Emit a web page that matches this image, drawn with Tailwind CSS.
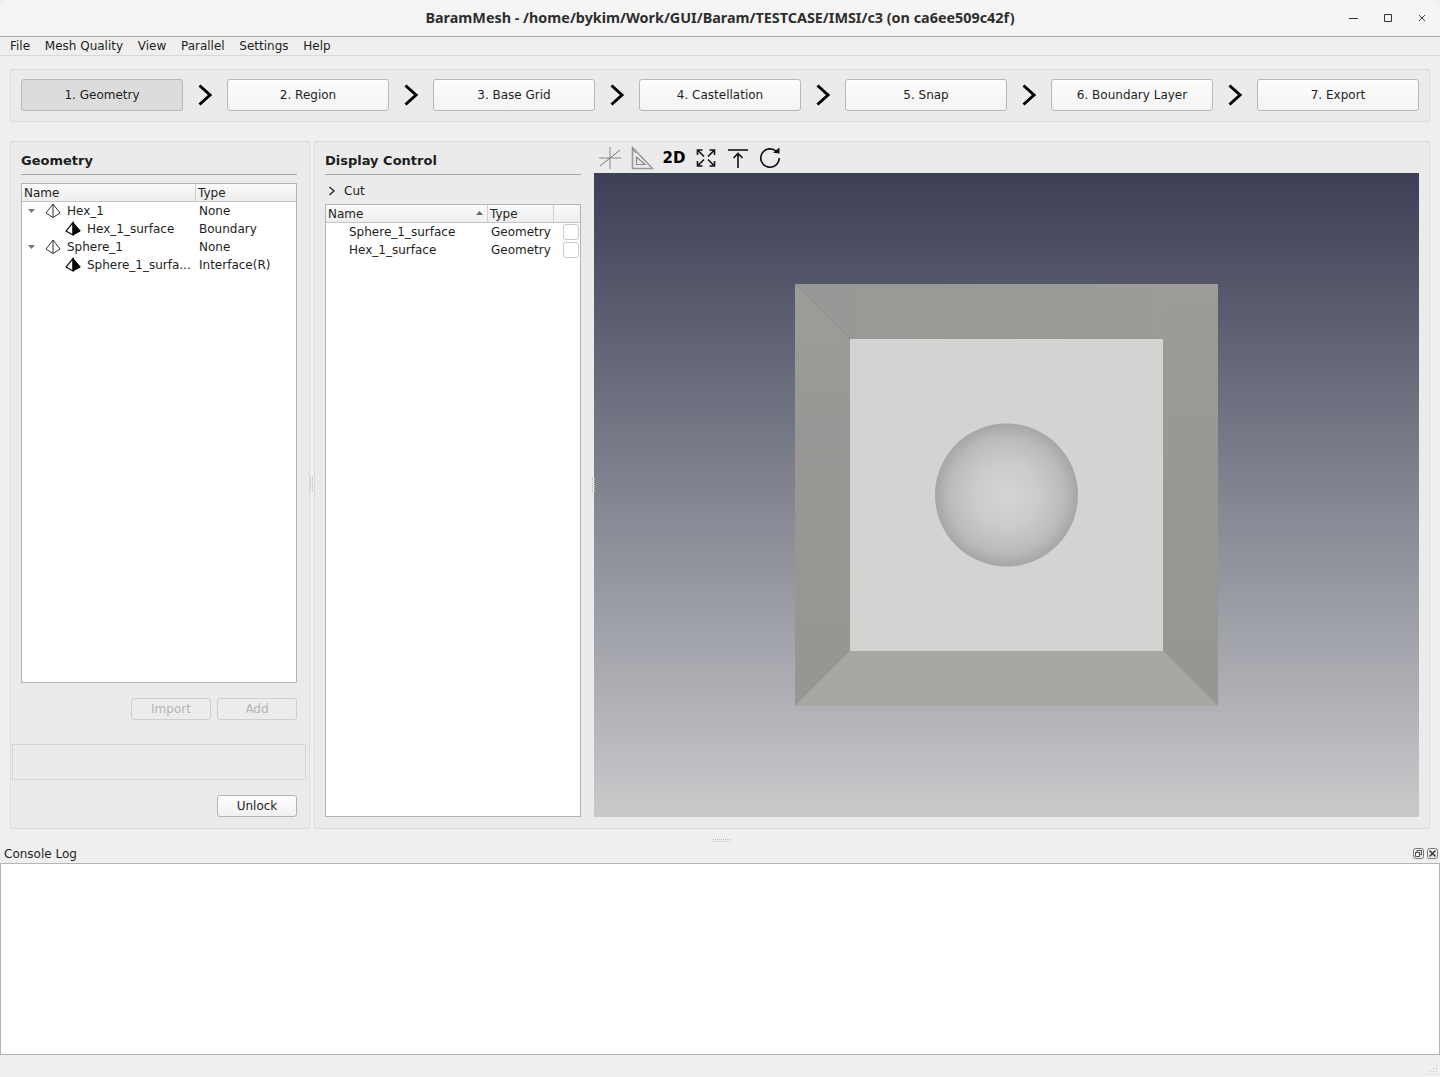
<!DOCTYPE html>
<html lang="en">
<head>
  <meta charset="UTF-8" />
  <title>BaramMesh</title>
  <script src="https://cdn.jsdelivr.net/npm/@tailwindcss/browser@4"></script>
</head>
<body class="bg-[#e8e8e8]">
<div class="w-[1440px] h-[1077px] flex flex-col overflow-hidden bg-[#efefef] text-[12px] leading-[18px] text-[#1e1e1e] font-['DejaVu_Sans',sans-serif]">

  <!-- title bar -->
  <div class="relative h-[37px] shrink-0 flex items-center justify-center rounded-t-[8px] border-b border-[#a8a8a4] bg-[#f5f5f5]">
    <span class="text-[14.37px] font-bold text-[#2e2e2e] font-['Noto_Sans',sans-serif]">BaramMesh - /home/bykim/Work/GUI/Baram/TESTCASE/IMSI/c3 (on ca6ee509c42f)</span>
    <div class="absolute right-0 top-0 h-[36px] flex items-center">
      <svg width="10" height="10" class="mr-[24px]"><path d="M0 5.5H9" stroke="#333" stroke-width="1"/></svg>
      <svg width="10" height="10" class="mr-[24px]"><path d="M1.5 1.5H8.5V8.5H1.5Z" fill="none" stroke="#333" stroke-width="1"/></svg>
      <svg width="10" height="10" class="mr-[13px]"><path d="M2 2L8 8M8 2L2 8" stroke="#444" stroke-width="1"/></svg>
    </div>
  </div>

  <!-- menu -->
  <div class="h-[19px] shrink-0 flex items-center gap-[14.7px] pl-[10px] border-b border-[#d8d8d8]">
    <span>File</span><span>Mesh Quality</span><span>View</span><span>Parallel</span><span>Settings</span><span>Help</span>
  </div>

  <!-- steps -->
  <div class="mt-[13px] mx-[10px] h-[53px] shrink-0 flex items-start pt-[9px] px-[10px] border border-[#dcdcdc] rounded-[2px] bg-[#ebebeb]">
    <div class="w-[162px] h-[32px] flex items-center justify-center rounded-[3px] border border-[#b8b8b8] bg-[#dcdcdc]">1. Geometry</div>
    <svg width="44" height="32" viewBox="0 0 44 32"><path d="M16.5 6.5L27 16L16.5 25.5" fill="none" stroke="#000" stroke-width="3"/></svg>
    <div class="w-[162px] h-[32px] flex items-center justify-center rounded-[3px] border border-[#b8b8b8] bg-gradient-to-b from-[#fdfdfd] to-[#f3f3f3]">2. Region</div>
    <svg width="44" height="32" viewBox="0 0 44 32"><path d="M16.5 6.5L27 16L16.5 25.5" fill="none" stroke="#000" stroke-width="3"/></svg>
    <div class="w-[162px] h-[32px] flex items-center justify-center rounded-[3px] border border-[#b8b8b8] bg-gradient-to-b from-[#fdfdfd] to-[#f3f3f3]">3. Base Grid</div>
    <svg width="44" height="32" viewBox="0 0 44 32"><path d="M16.5 6.5L27 16L16.5 25.5" fill="none" stroke="#000" stroke-width="3"/></svg>
    <div class="w-[162px] h-[32px] flex items-center justify-center rounded-[3px] border border-[#b8b8b8] bg-gradient-to-b from-[#fdfdfd] to-[#f3f3f3]">4. Castellation</div>
    <svg width="44" height="32" viewBox="0 0 44 32"><path d="M16.5 6.5L27 16L16.5 25.5" fill="none" stroke="#000" stroke-width="3"/></svg>
    <div class="w-[162px] h-[32px] flex items-center justify-center rounded-[3px] border border-[#b8b8b8] bg-gradient-to-b from-[#fdfdfd] to-[#f3f3f3]">5. Snap</div>
    <svg width="44" height="32" viewBox="0 0 44 32"><path d="M16.5 6.5L27 16L16.5 25.5" fill="none" stroke="#000" stroke-width="3"/></svg>
    <div class="w-[162px] h-[32px] flex items-center justify-center rounded-[3px] border border-[#b8b8b8] bg-gradient-to-b from-[#fdfdfd] to-[#f3f3f3]">6. Boundary Layer</div>
    <svg width="44" height="32" viewBox="0 0 44 32"><path d="M16.5 6.5L27 16L16.5 25.5" fill="none" stroke="#000" stroke-width="3"/></svg>
    <div class="w-[162px] h-[32px] flex items-center justify-center rounded-[3px] border border-[#b8b8b8] bg-gradient-to-b from-[#fdfdfd] to-[#f3f3f3]">7. Export</div>
  </div>

  <!-- main panels -->
  <div class="relative mt-[19px] mx-[10px] h-[688px] shrink-0 flex gap-[4px]">
    <!-- geometry panel -->
    <div class="w-[300px] shrink-0 flex flex-col border border-[#dcdcdc] rounded-[2px] bg-[#ebebeb]">
      <div class="ml-[10px] mr-[12px] mt-[10px] h-[23px] shrink-0 border-b border-[#a8a8a8] text-[13px] font-bold leading-[17px]">Geometry</div>
      <div class="ml-[10px] mr-[12px] mt-[8px] h-[500px] shrink-0 flex flex-col border border-[#b4b4b4] bg-white">
        <div class="h-[18px] shrink-0 flex border-b border-[#c4c4c4] bg-gradient-to-b from-[#fafafa] to-[#eeeeee]">
          <div class="w-[174px] pl-[2px] border-r border-[#d0d0d0]">Name</div>
          <div class="pl-[2px]">Type</div>
        </div>
        <div class="h-[18px] flex items-center">
          <svg width="10" height="6" class="ml-[5px] mr-[8px]"><path d="M1 1H8L4.5 5Z" fill="#777"/></svg>
          <svg width="16" height="16" viewBox="0 0 16 16" class="mr-[6px] -mt-[1px]"><path d="M8 1L1 10L8 14.5L15 10Z M8 1V14.5" fill="#fff" stroke="#333" stroke-width="1"/></svg>
          <span class="w-[132px]">Hex_1</span><span>None</span>
        </div>
        <div class="h-[18px] flex items-center">
          <svg width="16" height="16" viewBox="0 0 16 16" class="ml-[43px] mr-[6px]"><path d="M8 1.5L1 10L8 14Z" fill="#fff" stroke="#111" stroke-width="1.2"/><path d="M8 1.5L15.3 10L8 14Z" fill="#000" stroke="#000"/></svg>
          <span class="w-[112px]">Hex_1_surface</span><span>Boundary</span>
        </div>
        <div class="h-[18px] flex items-center">
          <svg width="10" height="6" class="ml-[5px] mr-[8px]"><path d="M1 1H8L4.5 5Z" fill="#777"/></svg>
          <svg width="16" height="16" viewBox="0 0 16 16" class="mr-[6px] -mt-[1px]"><path d="M8 1L1 10L8 14.5L15 10Z M8 1V14.5" fill="#fff" stroke="#333" stroke-width="1"/></svg>
          <span class="w-[132px]">Sphere_1</span><span>None</span>
        </div>
        <div class="h-[18px] flex items-center">
          <svg width="16" height="16" viewBox="0 0 16 16" class="ml-[43px] mr-[6px]"><path d="M8 1.5L1 10L8 14Z" fill="#fff" stroke="#111" stroke-width="1.2"/><path d="M8 1.5L15.3 10L8 14Z" fill="#000" stroke="#000"/></svg>
          <span class="w-[112px] whitespace-nowrap">Sphere_1_surfa...</span><span>Interface(R)</span>
        </div>
      </div>
      <div class="ml-[10px] mr-[12px] mt-[15px] flex justify-end gap-[6px]">
        <div class="w-[80px] h-[22px] flex items-center justify-center rounded-[3px] border border-[#cfcfcf] bg-[#ececec] text-[#b4b4b4]">Import</div>
        <div class="w-[80px] h-[22px] flex items-center justify-center rounded-[3px] border border-[#cfcfcf] bg-[#ececec] text-[#b4b4b4]">Add</div>
      </div>
      <div class="ml-[1px] mr-[3px] mt-[24px] h-[36px] border border-[#d4d4d4]"></div>
      <div class="ml-[10px] mr-[12px] mt-[15px] flex justify-end">
        <div class="w-[80px] h-[22px] flex items-center justify-center rounded-[3px] border border-[#b4b4b4] bg-gradient-to-b from-[#fdfdfd] to-[#f1f1f1]">Unlock</div>
      </div>
    </div>

    <!-- display and view panel -->
    <div class="flex-1 flex border border-[#dcdcdc] rounded-[2px] bg-[#ebebeb]">
      <div class="w-[256px] ml-[10px] shrink-0 flex flex-col">
        <div class="mt-[10px] h-[23px] shrink-0 border-b border-[#a8a8a8] text-[13px] font-bold leading-[17px]">Display Control</div>
        <div class="h-[29px] shrink-0 flex items-center pt-[2px]">
          <svg width="8" height="10" class="ml-[3px] mr-[8px]"><path d="M1.5 1L6 5L1.5 9" fill="none" stroke="#222" stroke-width="1.3"/></svg>
          <span>Cut</span>
        </div>
        <div class="h-[613px] flex flex-col border border-[#b4b4b4] bg-white">
          <div class="h-[18px] shrink-0 flex border-b border-[#c4c4c4] bg-gradient-to-b from-[#fafafa] to-[#eeeeee]">
            <div class="w-[162px] pl-[2px] flex items-center justify-between pr-[3px] border-r border-[#d0d0d0]"><span>Name</span><svg width="8" height="5"><path d="M0 4H7L3.5 0Z" fill="#666"/></svg></div>
            <div class="w-[66px] pl-[2px] border-r border-[#d0d0d0]">Type</div>
          </div>
          <div class="h-[18px] flex items-center">
            <span class="ml-[23px] w-[142px]">Sphere_1_surface</span><span class="w-[72px]">Geometry</span>
            <div class="w-[16px] h-[16px] rounded-[3px] border border-[#c8c8c8] bg-white"></div>
          </div>
          <div class="h-[18px] flex items-center">
            <span class="ml-[23px] w-[142px]">Hex_1_surface</span><span class="w-[72px]">Geometry</span>
            <div class="w-[16px] h-[16px] rounded-[3px] border border-[#c8c8c8] bg-white"></div>
          </div>
        </div>
      </div>

      <div class="ml-[13px] flex-1 flex flex-col">
        <!-- toolbar -->
        <div class="h-[31px] shrink-0 flex items-center pl-[4px]">
          <svg width="24" height="24" viewBox="0 0 24 24"><path d="M12 1V23M1 12H23" stroke="#aaa" stroke-width="1.5"/><path d="M2 20L22 4" stroke="#555" stroke-width="0.8"/></svg>
          <svg width="24" height="24" viewBox="0 0 24 24" class="ml-[8px]"><path d="M2.5 1.5V22.5H22.5Z" fill="none" stroke="#9a9a9a" stroke-width="1.6"/><path d="M6.5 11V18.5H15Z" fill="none" stroke="#888" stroke-width="1.2"/><path d="M2 3L6 7" stroke="#555" stroke-width="0.6"/></svg>
          <span class="ml-[8px] mt-[1px] w-[24px] text-center text-[15px] font-bold text-black leading-[24px] whitespace-nowrap">2D</span>
          <svg width="22" height="22" viewBox="0 0 22 22" class="ml-[9px]"><path d="M2.5 8V3H7.5M14.5 3H19.5V8M2.5 14V19H7.5M14.5 19H19.5V14M3.5 4L9 9.5M18.5 4L13 9.5M3.5 18L9 12.5M18.5 18L13 12.5" fill="none" stroke="#111" stroke-width="1.6"/></svg>
          <svg width="22" height="22" viewBox="0 0 22 22" class="ml-[10px]"><path d="M1 3H21" stroke="#111" stroke-width="1.6"/><path d="M11 21V6M6.5 11L11 6.5L15.5 11" fill="none" stroke="#111" stroke-width="1.6"/></svg>
          <svg width="24" height="24" viewBox="0 0 24 24" class="ml-[9px]"><path d="M18.5 5.5A9.2 9.2 0 1 0 21.2 12" fill="none" stroke="#111" stroke-width="1.7"/><path d="M15 6.8L21.5 7.5V1.5Z" fill="#111"/></svg>
        </div>
        <!-- 3d view -->
        <svg width="825" height="644" viewBox="0 0 825 644" class="shrink-0">
          <defs>
            <linearGradient id="bg" x1="0" y1="0" x2="0" y2="1"><stop offset="0" stop-color="#3c3f56"/><stop offset="1" stop-color="#c9cacb"/></linearGradient>
            <linearGradient id="top" x1="0" y1="0" x2="1" y2="0"><stop offset="0" stop-color="#989896"/><stop offset="1" stop-color="#9c9b98"/></linearGradient>
            <linearGradient id="left" x1="0" y1="0" x2="0" y2="1"><stop offset="0" stop-color="#9d9d9a"/><stop offset="0.35" stop-color="#989795"/><stop offset="1" stop-color="#979693"/></linearGradient>
            <linearGradient id="right" x1="0" y1="0" x2="0" y2="1"><stop offset="0" stop-color="#9c9b98"/><stop offset="0.5" stop-color="#989794"/><stop offset="1" stop-color="#979693"/></linearGradient>
            <radialGradient id="sphere" cx="0.5" cy="0.5" r="0.5"><stop offset="0" stop-color="#d4d4d2"/><stop offset="0.45" stop-color="#cbcbc9"/><stop offset="0.8" stop-color="#bbbbb9"/><stop offset="1" stop-color="#a6a6a4"/></radialGradient>
          </defs>
          <rect width="825" height="644" fill="url(#bg)"/>
          <path d="M201 111H624V166H256Z" fill="url(#top)"/>
          <path d="M201 111L256 166V478L201 533Z" fill="url(#left)"/>
          <path d="M569 111H624V533L569 478Z" fill="url(#right)"/>
          <path d="M201 533L256 478H569L624 533Z" fill="#a8a7a3"/>
          <rect x="256" y="166" width="313" height="312" fill="#d3d3d1"/>
          <circle cx="412.5" cy="322" r="71.5" fill="url(#sphere)"/>
        </svg>
      </div>
    </div>

    <!-- splitter handles -->
    <svg width="3" height="15" class="absolute left-[300px] top-[336px]"><path d="M0.5 0V15M2.5 0V15" stroke="#bbb" stroke-dasharray="1 1"/></svg>
    <svg width="3" height="15" class="absolute left-[582px] top-[336px]"><path d="M0.5 0V15M2.5 0V15" stroke="#bbb" stroke-dasharray="1 1"/></svg>
  </div>

  <!-- console dock -->
  <div class="h-[15px] shrink-0 flex items-start justify-center pt-[10px] pl-[3px]">
    <svg width="18" height="3"><path d="M0 0.5H18M0 2.5H18" stroke="#bbb" stroke-dasharray="1 1"/></svg>
  </div>
  <div class="h-[19px] shrink-0 flex items-center justify-between pl-[4px] pr-[2px]">
    <span>Console Log</span>
    <div class="flex gap-[3px]">
      <svg width="11" height="11" viewBox="0 0 11 11"><rect x="0.5" y="0.5" width="10" height="10" rx="2" fill="none" stroke="#777"/><rect x="4" y="2.5" width="4.5" height="4" fill="none" stroke="#555"/><rect x="2.5" y="4.5" width="4" height="4" fill="#efefef" stroke="#555"/></svg>
      <svg width="11" height="11" viewBox="0 0 11 11"><rect x="0.5" y="0.5" width="10" height="10" rx="2" fill="none" stroke="#777"/><path d="M2.5 2.5L8.5 8.5M8.5 2.5L2.5 8.5" stroke="#333" stroke-width="1.5"/></svg>
    </div>
  </div>
  <div class="h-[192px] shrink-0 border border-[#b4b4b4] bg-white"></div>
  <div class="flex-1 flex items-end justify-end pr-[2px] pb-[1px]">
    <svg width="12" height="12" viewBox="0 0 12 12" fill="#c0c0c0"><rect x="10" y="1" width="1" height="1"/><rect x="7" y="4" width="1" height="1"/><rect x="10" y="4" width="1" height="1"/><rect x="4" y="7" width="1" height="1"/><rect x="7" y="7" width="1" height="1"/><rect x="10" y="7" width="1" height="1"/><rect x="1" y="10" width="1" height="1"/><rect x="4" y="10" width="1" height="1"/><rect x="7" y="10" width="1" height="1"/><rect x="10" y="10" width="1" height="1"/></svg>
  </div>
</div>
</body>
</html>
